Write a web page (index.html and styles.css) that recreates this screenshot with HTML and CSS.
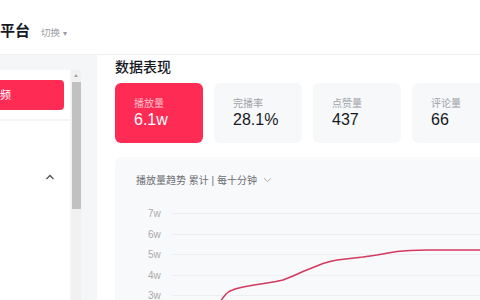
FILE: index.html
```html
<!DOCTYPE html>
<html>
<head>
  <meta charset="utf-8">
  <title>数据表现</title>
  <link rel="stylesheet" href="styles.css">
</head>
<body>
  <div class="header">
    <span class="brand">平台</span>
    <span class="switch">切换 <span class="caret">▾</span></span>
  </div>
  <div class="layout">
    <div class="sidebar">
      <div class="side-panel">
        <div class="side-top">
          <div class="side-active">频</div>
        </div>
        <div class="side-rest">
          <svg class="chev" width="10" height="8" viewBox="0 0 10 8">
            <polyline points="1.5,6 5,2.5 8.5,6" fill="none" stroke="#555" stroke-width="1.4"/>
          </svg>
        </div>
      </div>
      <div class="scrollbar">
        <div class="sb-arrow"></div>
        <div class="sb-thumb"></div>
      </div>
    </div>
    <div class="main">
      <h2 class="section-title">数据表现</h2>
      <div class="stats">
        <div class="stat active">
          <div class="stat-label">播放量</div>
          <div class="stat-value">6.1w</div>
        </div>
        <div class="stat">
          <div class="stat-label">完播率</div>
          <div class="stat-value">28.1%</div>
        </div>
        <div class="stat">
          <div class="stat-label">点赞量</div>
          <div class="stat-value">437</div>
        </div>
        <div class="stat">
          <div class="stat-label">评论量</div>
          <div class="stat-value">66</div>
        </div>
      </div>
      <div class="chart-card">
        <div class="chart-title">播放量趋势 累计 | 每十分钟
          <svg class="down" width="9" height="6" viewBox="0 0 9 6">
            <polyline points="1,1.2 4.5,4.6 8,1.2" fill="none" stroke="#aaa" stroke-width="1"/>
          </svg>
        </div>
        <svg class="chart" width="364" height="100" viewBox="0 0 364 100">
          <g stroke="#eceef1" stroke-width="1">
            <line x1="36" y1="13.5" x2="364" y2="13.5"/>
            <line x1="36" y1="34.5" x2="364" y2="34.5"/>
            <line x1="36" y1="54.5" x2="364" y2="54.5"/>
            <line x1="36" y1="75.5" x2="364" y2="75.5"/>
            <line x1="36" y1="95.5" x2="364" y2="95.5"/>
          </g>
          <g class="axis" fill="#aaa">
            <text x="12" y="17">7w</text>
            <text x="12" y="38">6w</text>
            <text x="12" y="58">5w</text>
            <text x="12" y="79">4w</text>
            <text x="12" y="99">3w</text>
          </g>
          <polyline fill="none" stroke="#d4395f" stroke-width="1.5" stroke-linejoin="round" stroke-linecap="round"
            points="82,106 86,99 90,94 93,91.5 99,89 107,87 118,85 131,83 140,81.5 147,80 157,76 167,71.5 177,67.5 187,63.5 194,61.5 201,60 214,58.5 227,57 241,55 252,53 261,51.5 274,50.6 291,50 320,50 364,50"/>
        </svg>
      </div>
    </div>
  </div>
</body>
</html>
```

FILE: styles.css
```css
body {
  margin: 0;
  width: 480px;
  height: 300px;
  overflow: hidden;
  background: #f5f6f8;
  font-family: "Liberation Sans", "Noto Sans CJK SC", sans-serif;
  color: #222;
}

.header {
  height: 55px;
  background: #fff;
  display: flex;
  align-items: center;
  box-sizing: border-box;
  border-bottom: 1px solid #eef0f2;
}
.brand {
  font-size: 15px;
  font-weight: bold;
  margin-top: 4px;
  color: #161823;
}
.switch {
  font-size: 9.5px;
  color: #9a9ba1;
  margin-left: 11px;
  margin-top: 10px;
}
.caret {
  font-size: 8px;
}

.layout {
  display: flex;
  height: 245px;
  overflow: hidden;
}
.sidebar {
  display: flex;
  margin-top: 15px;
  width: 81px;
  flex: none;
}
.side-panel {
  width: 71px;
  display: flex;
  flex-direction: column;
}
.side-top {
  background: #fff;
  padding: 10px 6px 9px 0;
  border-bottom: 2px solid #f3f4f6;
}
.side-active {
  height: 30px;
  background: #fe2c55;
  border-radius: 0 4px 4px 0;
  color: #fff;
  font-size: 11px;
  line-height: 30px;
}
.side-rest {
  flex: 1;
  background: #fff;
  position: relative;
}
.chev {
  position: absolute;
  left: 45px;
  top: 52px;
}
.scrollbar {
  width: 10px;
  margin-left: 1px;
  background: #f1f1f1;
  display: flex;
  flex-direction: column;
  align-items: center;
}
.sb-arrow {
  margin-top: 4px;
  width: 0;
  height: 0;
  border-left: 2.5px solid transparent;
  border-right: 2.5px solid transparent;
  border-bottom: 3px solid #a3a3a3;
}
.sb-thumb {
  margin-top: 5px;
  width: 9px;
  height: 127px;
  background: #c1c1c1;
}

.main {
  flex: 1;
  margin-left: 16px;
  background: #fff;
  padding: 3px 0 0 18px;
  min-width: 0;
}
.section-title {
  margin: 0;
  font-size: 14px;
  line-height: 18px;
  font-weight: 500;
  color: #161823;
}
.stats {
  display: flex;
  gap: 11px;
  margin-top: 7px;
}
.stat {
  flex: none;
  width: 88px;
  height: 60px;
  box-sizing: border-box;
  border-radius: 6px;
  background: #f6f8fa;
  padding: 14px 0 0 19px;
}
.stat-label {
  font-size: 10px;
  line-height: 13px;
  color: #a0a2a8;
}
.stat-value {
  font-size: 16px;
  line-height: 20px;
  color: #161823;
}
.stat.active {
  background: #fe2c55;
}
.stat.active .stat-label {
  color: rgba(255, 255, 255, 0.7);
}
.stat.active .stat-value {
  color: #fff;
}

.chart-card {
  margin-top: 14px;
  width: 380px;
  height: 160px;
  border-radius: 6px;
  background: #f8f9fb;
  padding: 17px 0 0 21px;
  box-sizing: border-box;
}
.chart-title {
  font-size: 10px;
  line-height: 14px;
  color: #6b6d73;
}
.down {
  margin-left: 3px;
  vertical-align: 1px;
}
.chart {
  display: block;
  margin-top: 12px;
  overflow: visible;
}
.axis text {
  font-size: 10px;
  font-family: "Liberation Sans", sans-serif;
}
```
